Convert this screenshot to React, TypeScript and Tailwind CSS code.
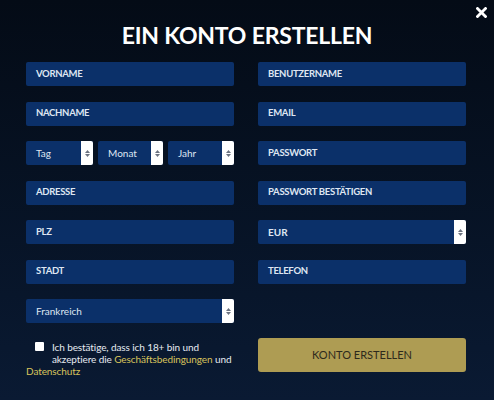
import { useState } from "react";

const font = { fontFamily: "Lato, 'Open Sans', sans-serif" };

function Spinner() {
  return (
    <span className="absolute right-0 top-0 bottom-0 w-[12px] bg-white rounded-r-[2px] flex flex-col items-center justify-center gap-[1px]">
      <svg width="5" height="3" viewBox="0 0 5 3"><path d="M0 3 L2.5 0 L5 3 Z" fill="#6b7280" /></svg>
      <svg width="5" height="3" viewBox="0 0 5 3"><path d="M0 0 L2.5 3 L5 0 Z" fill="#6b7280" /></svg>
    </span>
  );
}

function Field({ label }: { label: string }) {
  return (
    <div className="h-[24px] w-[208px] bg-[#0b3069] rounded-[2px] flex items-center pl-[10px] text-[9.5px] font-bold text-[#dfe6f2] tracking-[-0.3px]">
      {label}
    </div>
  );
}

function SelectBox({ label, className }: { label: string; className: string }) {
  return (
    <div className={`relative h-[24px] bg-[#0b3069] rounded-[2px] flex items-center pl-[10px] text-[10px] text-[#dfe6f2] ${className}`}>
      {label}
      <Spinner />
    </div>
  );
}

export default function App() {
  const [agree, setAgree] = useState(false);
  return (
    <div className="relative w-[494px] h-[400px] overflow-hidden bg-gradient-to-b from-[#040b16] to-[#0a1a33] text-white" style={font}>
      <button className="absolute right-[6px] top-[5px] w-[14px] h-[14px] flex items-center justify-center">
        <svg width="11" height="11" viewBox="0 0 11 11"><path d="M1.5 1.5 L9.5 9.5 M9.5 1.5 L1.5 9.5" stroke="white" strokeWidth="2.8" strokeLinecap="square" /></svg>
      </button>
      <h1 className="text-center text-[23px] font-bold leading-none pt-[24px] tracking-[-0.2px]">EIN KONTO ERSTELLEN</h1>
      <div className="grid grid-cols-[208px_208px] gap-x-[24px] gap-y-[15.5px] pl-[26px] mt-[15px]">
        <Field label="VORNAME" />
        <Field label="BENUTZERNAME" />
        <Field label="NACHNAME" />
        <Field label="EMAIL" />
        <div className="flex gap-[5px] w-[208px]">
          <SelectBox label="Tag" className="w-[67px]" />
          <SelectBox label="Monat" className="w-[65px]" />
          <SelectBox label="Jahr" className="w-[66px]" />
        </div>
        <Field label="PASSWORT" />
        <Field label="ADRESSE" />
        <Field label="PASSWORT BESTÄTIGEN" />
        <Field label="PLZ" />
        <SelectBox label="EUR" className="w-[208px] font-bold text-[9.5px]" />
        <Field label="STADT" />
        <Field label="TELEFON" />
        <SelectBox label="Frankreich" className="w-[208px]" />
        <div />
      </div>
      <div className="grid grid-cols-[232px_208px] pl-[26px] mt-[15px]">
        <div className="text-[10px] leading-[12px] text-[#e6ebf2] pt-[3px] tracking-[-0.1px]">
          <label className="cursor-pointer">
            <span className="inline-flex w-[26px] pl-[9px]">
              <input
                type="checkbox"
                checked={agree}
                onChange={e => setAgree(e.target.checked)}
                className="appearance-none w-[9px] h-[9px] bg-white rounded-[1px] align-middle"
              />
            </span>
            Ich bestätige, dass ich 18+ bin und
            <br />
            <span className="pl-[26px]">akzeptiere die </span>
            <a className="text-[#d9c45c]">Geschäftsbedingungen</a> und
            <br />
            <a className="text-[#d9c45c]">Datenschutz</a>
          </label>
        </div>
        <button className="h-[34px] w-[208px] bg-[#ae9c53] rounded-[3px] text-[11px] text-[#2d2a1c]">
          KONTO ERSTELLEN
        </button>
      </div>
    </div>
  );
}
